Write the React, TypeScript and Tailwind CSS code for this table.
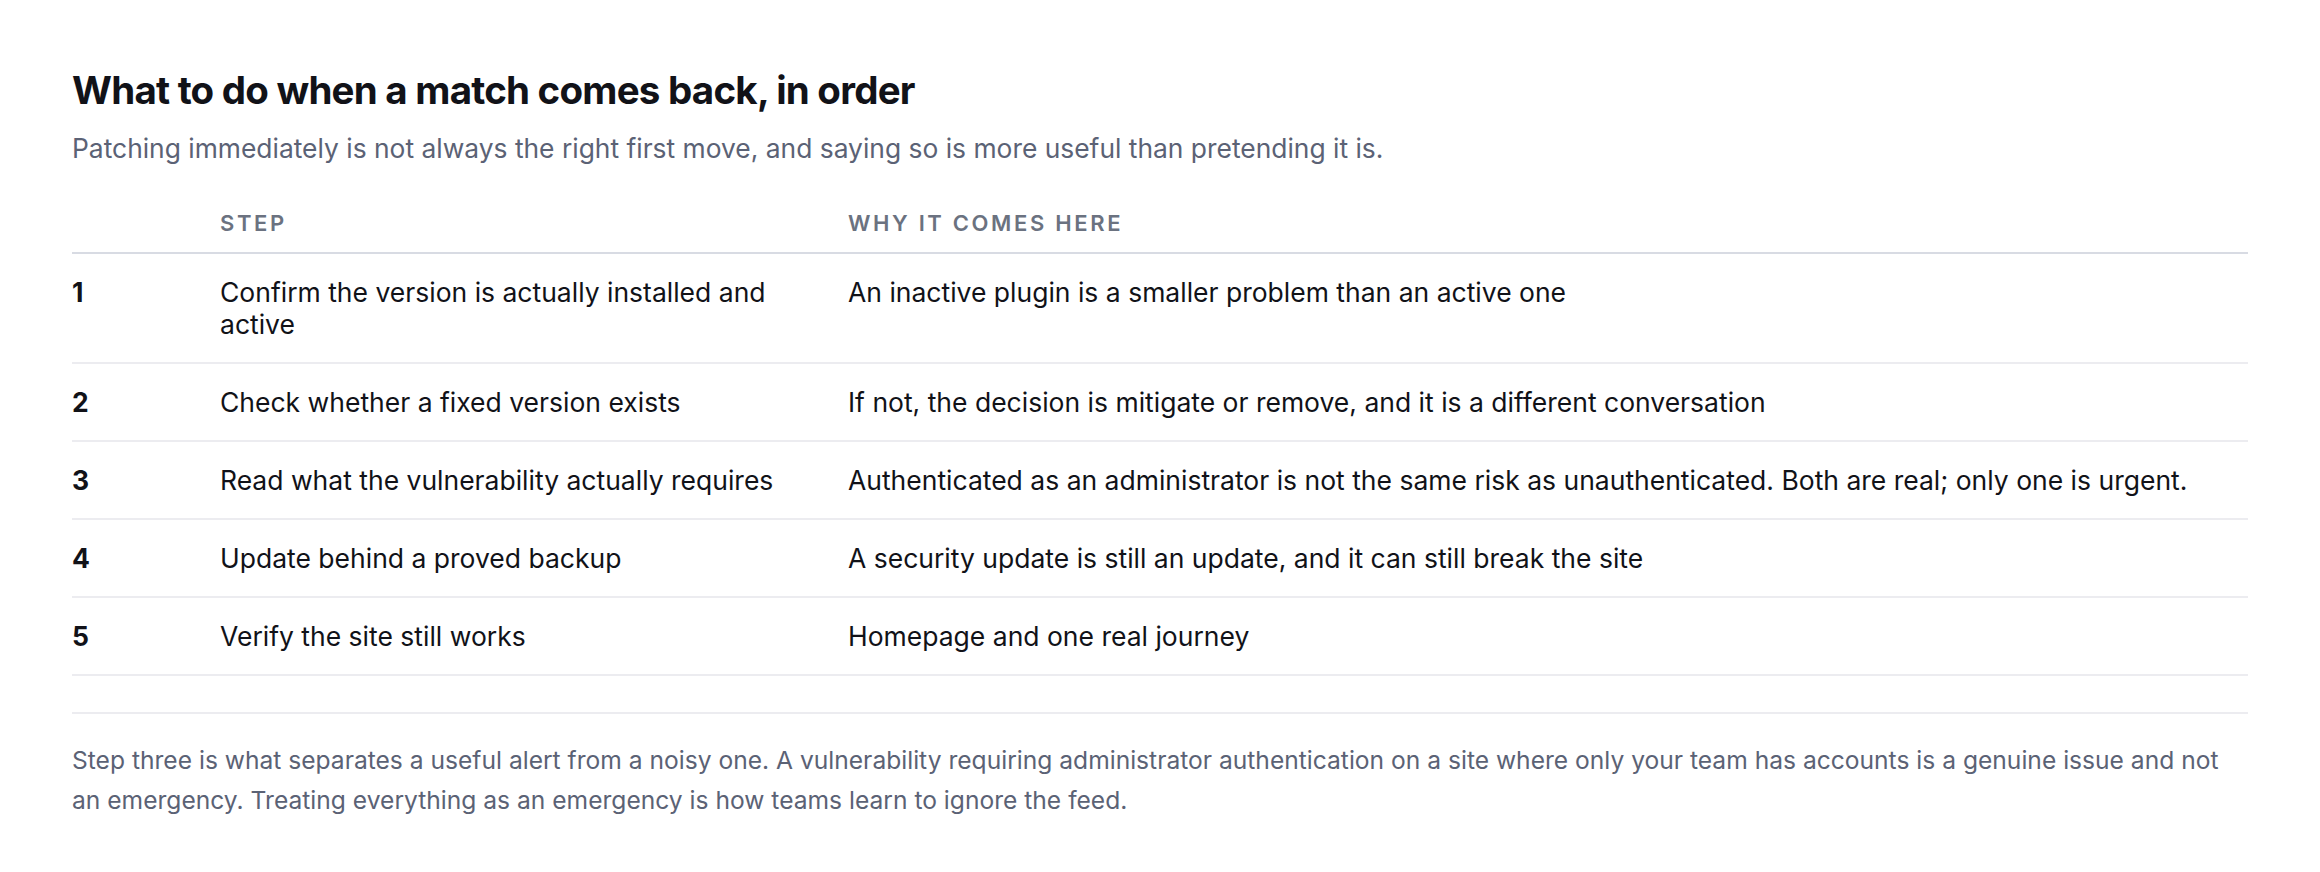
import React from "react";

const steps = [
  {
    n: "1",
    step: "Confirm the version is actually installed and active",
    why: "An inactive plugin is a smaller problem than an active one",
  },
  {
    n: "2",
    step: "Check whether a fixed version exists",
    why: "If not, the decision is mitigate or remove, and it is a different conversation",
  },
  {
    n: "3",
    step: "Read what the vulnerability actually requires",
    why: "Authenticated as an administrator is not the same risk as unauthenticated. Both are real; only one is urgent.",
  },
  {
    n: "4",
    step: "Update behind a proved backup",
    why: "A security update is still an update, and it can still break the site",
  },
  {
    n: "5",
    step: "Verify the site still works",
    why: "Homepage and one real journey",
  },
];

export default function App() {
  return (
    <div className="min-h-screen bg-white px-[72px] pt-[67px] pb-16 font-['Inter',sans-serif]">
      <h2 className="text-[38.5px] leading-[46px] font-bold tracking-[-0.02em] text-[#111218]">
        What to do when a match comes back, in order
      </h2>
      <p className="mt-[17px] text-[26.4px] leading-[36px] text-[#5b6275]">
        Patching immediately is not always the right first move, and saying so is more useful than pretending it is.
      </p>

      <table className="mt-[28px] w-full table-fixed border-collapse text-left">
        <colgroup>
          <col className="w-[148px]" />
          <col className="w-[628px]" />
          <col />
        </colgroup>
        <thead>
          <tr className="border-b-2 border-[#d8dbe3]">
            <th className="pt-[15px] pb-[15px]" />
            <th className="pt-[15px] pb-[15px] pr-6 text-[22px] leading-[28px] font-semibold uppercase tracking-[0.12em] text-[#6b7280]">
              Step
            </th>
            <th className="pt-[15px] pb-[15px] text-[22px] leading-[28px] font-semibold uppercase tracking-[0.12em] text-[#6b7280]">
              Why it comes here
            </th>
          </tr>
        </thead>
        <tbody>
          {steps.map((s) => (
            <tr key={s.n} className="border-b-2 border-[#ececf0] align-top">
              <td className="py-[22px] text-[26.5px] leading-[32px] font-bold text-[#111218]">
                {s.n}
              </td>
              <td className="py-[22px] pr-6 text-[26.5px] leading-[32px] text-[#111218]">
                {s.step}
              </td>
              <td className="py-[22px] text-[26.5px] leading-[32px] text-[#111218]">
                {s.why}
              </td>
            </tr>
          ))}
        </tbody>
      </table>

      <p className="mt-[36px] border-t-2 border-[#ececf0] pt-[26px] text-[24.6px] leading-[40px] text-[#5b6275]">
        Step three is what separates a useful alert from a noisy one. A vulnerability requiring administrator
        authentication on a site where only your team has accounts is a genuine issue and not an emergency.
        Treating everything as an emergency is how teams learn to ignore the feed.
      </p>
    </div>
  );
}
